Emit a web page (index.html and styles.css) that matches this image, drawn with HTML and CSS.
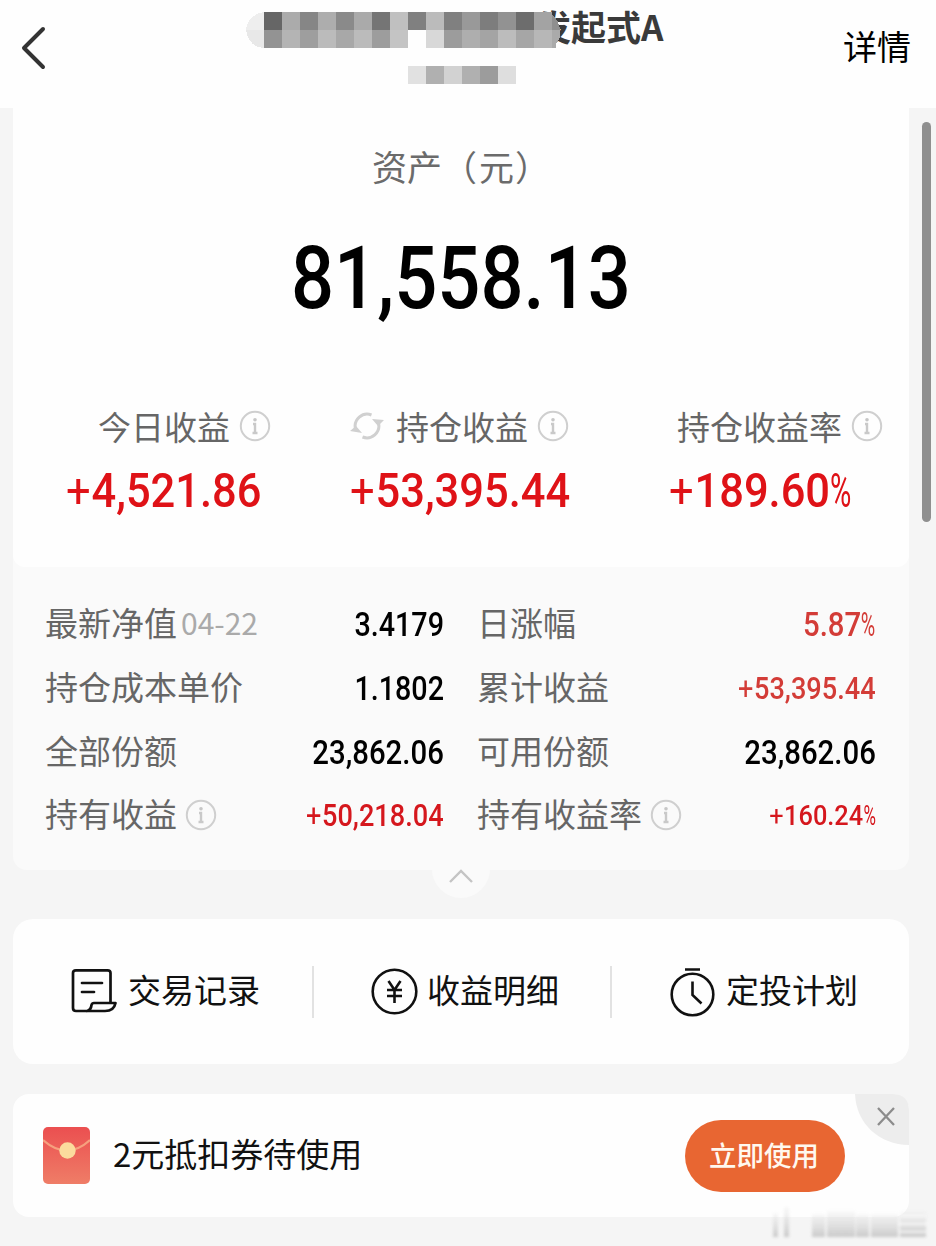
FILE: index.html
```
<!DOCTYPE html>
<html lang="zh-CN">
<head>
<meta charset="utf-8">
<title>资产详情</title>
<link rel="stylesheet" href="styles.css">
</head>
<body>
<svg class="defs" width="0" height="0" aria-hidden="true">
  <symbol id="info" viewBox="0 0 32 32"><circle cx="16" cy="16" r="14.2" fill="none" stroke="#cfcfcf" stroke-width="2"/><circle cx="16" cy="9.800" r="1.800" fill="#c6c6c6"/><path d="M14 14H16V22.800M13.500 23H18.500" fill="none" stroke="#c9c9c9" stroke-width="2.400"/></symbol>
</svg>
<header class="topbar">
  <svg class="back" width="26" height="44" viewBox="0 0 26 44"><path d="M22 3 3 22 22 41" fill="none" stroke="#333" stroke-width="4" stroke-linecap="round" stroke-linejoin="round"/></svg>
  <h1 class="title">发起式A</h1>
  <a class="more">详情</a>
  <svg class="mosaic" width="315" height="72" viewBox="0 0 315 72" shape-rendering="crispEdges">
    <path d="M18 0C8 1 0 9 0 18H18Z" fill="#eee"/><path d="M0 18C1 28 8 36 18 36V18Z" fill="#e8e8e8"/>
    <g><rect x="18" width="18" height="18" fill="#666"/><rect x="36" width="18" height="18" fill="#ababab"/><rect x="54" width="18" height="18" fill="#868686"/><rect x="72" width="18" height="18" fill="#adadad"/><rect x="90" width="18" height="18" fill="#8a8a8a"/><rect x="108" width="18" height="18" fill="#aaa"/><rect x="126" width="18" height="18" fill="#757575"/><rect x="144" width="18" height="18" fill="#c0c0c0"/><rect x="162" width="18" height="18" fill="#808080"/><rect x="180" width="18" height="18" fill="#bbb"/><rect x="198" width="18" height="18" fill="#808080"/><rect x="216" width="18" height="18" fill="#999"/><rect x="234" width="18" height="18" fill="#7d7d7d"/><rect x="252" width="18" height="18" fill="#929292"/><rect x="270" width="18" height="18" fill="#6d6d6d"/><rect x="288" width="18" height="18" fill="#a3a3a3"/><path d="M306 3Q313 8 314 18H306Z" fill="#8f8f8f"/></g>
    <g transform="translate(0 18)"><rect x="18" width="18" height="18" fill="#939393"/><rect x="36" width="18" height="18" fill="#b4b4b4"/><rect x="54" width="18" height="18" fill="#9e9e9e"/><rect x="72" width="18" height="18" fill="#bbb"/><rect x="90" width="18" height="18" fill="#a8a8a8"/><rect x="108" width="18" height="18" fill="#bbb"/><rect x="126" width="18" height="18" fill="#9d9d9d"/><rect x="144" width="18" height="18" fill="#c4c4c4"/><rect x="180" width="18" height="18" fill="#d8d8d8"/><rect x="198" width="18" height="18" fill="#9c9c9c"/><rect x="216" width="18" height="18" fill="#aeaeae"/><rect x="234" width="18" height="18" fill="#a4a4a4"/><rect x="252" width="18" height="18" fill="#bcbcbc"/><rect x="270" width="18" height="18" fill="#a6a6a6"/><rect x="288" width="18" height="18" fill="#b7b7b7"/><path d="M306 0H314V6Q313 11 310 13V18H306Z" fill="#aaa"/></g>
    <g transform="translate(162 54)"><rect width="18" height="18" fill="#e1e1e1"/><rect x="18" width="18" height="18" fill="#b0b0b0"/><rect x="36" width="18" height="18" fill="#d2d2d2"/><rect x="54" width="18" height="18" fill="#b0b0b0"/><rect x="72" width="18" height="18" fill="#9c9c9c"/><rect x="90" width="18" height="18" fill="#dedede"/></g>
  </svg>
</header>
<main class="page">
  <section class="details">
    <div class="asset">
      <div class="asset-label">资产<span class="paren open">（</span><span>元</span><span class="paren shut">）</span></div>
      <div class="asset-value"><span class="num">81,558.13</span></div>
      <div class="stats">
        <div class="stat"><div class="label first">今日收益<svg class="info"><use href="#info"/></svg></div><div class="value"><span class="num"><i class="plus">+</i>4,521.86</span></div></div>
        <div class="stat"><div class="label"><svg class="refresh" width="34" height="30" viewBox="0 0 34 30"><path d="M21.500 4A12 12 0 0 0 5.500 18M12.500 26A12 12 0 0 0 28.500 12" fill="none" stroke="#d0d0d0" stroke-width="3"/><path d="M0 20 6 15 12 22ZM34 9 28 15 22 8Z" fill="#d0d0d0"/></svg>持仓收益<svg class="info"><use href="#info"/></svg></div><div class="value"><span class="num"><i class="plus">+</i>53,395.44</span></div></div>
        <div class="stat"><div class="label third">持仓收益率<svg class="info"><use href="#info"/></svg></div><div class="value"><span class="num"><i class="plus">+</i>189.60<i class="pct">%</i></span></div></div>
      </div>
    </div>
    <div class="rows">
      <div class="cell"><span>最新净值<small>04-22</small></span><b class="num short">3.4179</b></div>
      <div class="cell"><span>日涨幅</span><b class="num soft">5.87<i class="pct">%</i></b></div>
      <div class="cell"><span>持仓成本单价</span><b class="num short">1.1802</b></div>
      <div class="cell"><span>累计收益</span><b class="num soft signed"><i class="plus">+</i>53,395.44</b></div>
      <div class="cell"><span>全部份额</span><b class="num">23,862.06</b></div>
      <div class="cell"><span>可用份额</span><b class="num">23,862.06</b></div>
      <div class="cell"><span>持有收益<svg class="info"><use href="#info"/></svg></span><b class="num red signed"><i class="plus">+</i>50,218.04</b></div>
      <div class="cell"><span>持有收益率<svg class="info"><use href="#info"/></svg></span><b class="num red rate"><i class="plus">+</i>160.24<i class="pct">%</i></b></div>
    </div>
    <svg class="fold" width="60" height="60" viewBox="0 0 60 60"><circle cx="30" cy="30" r="29" fill="#fafafa"/><path d="M19 43 30 32 41 43" fill="none" stroke="#c4c4c4" stroke-width="2.400"/></svg>
  </section>
  <nav class="actions">
    <a class="action"><svg width="46" height="46" viewBox="0 0 46 46" fill="none" stroke="#111" stroke-width="2.700" stroke-linejoin="round" stroke-linecap="round"><path d="M39.500 34V4Q39.500 1.400 36.500 1.400H5Q2 1.400 2 4V39Q2 42 5 42H34Q43 42 44.500 34H23Q21 34 20.500 36Q20 41 16 42"/><path d="M11 14H31M11 23H23"/></svg><span>交易记录</span></a>
    <a class="action"><svg width="47" height="47" viewBox="0 0 47 47" fill="none" stroke="#111" stroke-width="2.600"><circle cx="23.500" cy="23.500" r="21.800"/><path d="M17.500 13 23.500 22 29.500 13M16 22H31M16 28H31M23.500 22V35"/></svg><span>收益明细</span></a>
    <a class="action"><svg width="45" height="50" viewBox="0 0 45 50" fill="none" stroke="#111" stroke-width="2.600"><circle cx="22.500" cy="27.500" r="20.800"/><path d="M15 2.500H30M22.500 14.500V28L31.500 36.500"/></svg><span>定投计划</span></a>
  </nav>
  <section class="coupon">
    <svg width="47" height="57" viewBox="0 0 47 57"><defs><linearGradient id="env" x2="0" y2="1"><stop stop-color="#eb4f50"/><stop offset="1" stop-color="#ef7d67"/></linearGradient></defs><rect width="47" height="57" rx="5" fill="url(#env)"/><path d="M0 13Q24 34 47 13" fill="none" stroke="#f6a07e" stroke-width="2.200"/><circle cx="24.500" cy="23.500" r="8.200" fill="#fbdb9d"/></svg>
    <span class="coupon-text">2元抵扣券待使用</span>
    <button class="use">立即使用</button>
    <svg class="close" width="54" height="51" viewBox="0 0 54 51"><path d="M0 0H37Q54 0 54 17V51C24 51 1 29 0 0Z" fill="#ededed"/><path d="M23 14 39 31M39 14 23 31" stroke="#8c8c8c" stroke-width="2.300"/></svg>
  </section>
</main>
<div class="scrollbar"></div>
<svg class="watermark" width="160" height="34" viewBox="0 0 160 34"><defs><linearGradient id="wm" x2="0" y2="1"><stop stop-color="#ddd" stop-opacity=".15"/><stop offset="1" stop-color="#c9c9c9"/></linearGradient></defs><g fill="url(#wm)"><rect x="3" y="6" width="5" height="24"/><rect x="14" y="0" width="5" height="30"/><rect x="42" y="7" width="13" height="23"/><rect x="57" y="4" width="28" height="26"/><rect x="86" y="7" width="13" height="23"/><rect x="101" y="7" width="27" height="23"/><rect x="130" y="5" width="26" height="25"/></g><path d="M130 9H156M128 17H158M130 25H156" stroke="#fff" stroke-width="2" opacity=".7"/></svg>
</body>
</html>
```
FILE: styles.css
```
* { box-sizing: border-box; }
body {
  margin: 0;
  position: relative;
  height: 1246px;
  overflow: hidden;
  background: #f5f5f5;
  color: #111;
  font-family: "Noto Sans CJK SC", sans-serif;
  font-size: 33px;
}
.defs { position: absolute; }
.topbar {
  position: relative;
  display: flex;
  justify-content: space-between;
  height: 108px;
  padding: 0 25px 0 21px;
  background: #fefefe;
}
.back { margin-top: 26px; }
.title {
  margin: 0 0 0 489px;
  font-size: 35px;
  line-height: 52px;
  font-weight: 700;
  color: #3a3a3a;
}
.more { margin-left: auto; font-size: 34px; line-height: 92px; color: #000; }
.mosaic { position: absolute; left: 246px; top: 12px; }

.page { width: 909px; padding-left: 13px; }
.details {
  position: relative;
  height: 762px;
  background: #fafafa;
  border-radius: 0 0 14px 14px;
}
.asset {
  height: 459px;
  background: #fefefe;
  border-radius: 0 0 12px 12px;
}
.asset-label {
  display: flex;
  height: 84px;
  padding: 32px 0 0 359px;
  font-size: 35px;
  line-height: 52px;
  color: #6b6b6b;
}
.open { margin: 0 2px 0 0; }
.shut { margin-left: 1px; }
.asset-value {
  padding: 28px 0 0 278px;
  font-size: 87px;
  line-height: 100px;
  color: #000;
}
.num {
  display: inline-block;
  font-family: Roboto, sans-serif;
  font-weight: 500;
  transform: scaleX(.89);
  transform-origin: left center;
  white-space: nowrap;
}
.asset-value .num { transform: scaleX(.872); }
.plus { font-style: normal; font-weight: 400; margin-right: .02em; }
.pct {
  display: inline-block;
  font-style: normal;
  font-weight: 400;
  transform: scaleX(.67);
  transform-origin: left center;
  margin-right: -.24em;
}
.stats {
  display: grid;
  grid-template-columns: 284px 319px 1fr;
  padding: 73px 0 0 53px;
}
.label { display: flex; align-items: center; height: 50px; line-height: 42px; color: #666; white-space: nowrap; }
.label.first { padding-left: 32px; }
.label.third { padding-left: 8px; }
.info { width: 32px; height: 32px; margin-left: 9px; flex: none; }
.refresh { margin-right: 12px; }
.value { height: 71px; line-height: 71px; font-size: 48px; color: #df1217; }
.value .num { transform: scaleX(.905); }

.rows {
  display: grid;
  grid-template-columns: 399px 398px;
  column-gap: 34px;
  grid-auto-rows: 63.7px;
  padding: 25px 0 0 32px;
}
.cell { display: flex; align-items: center; justify-content: space-between; color: #666; }
.cell > span { display: flex; align-items: center; margin-top: -3px; }
.cell:nth-child(even) > span { margin-left: -1px; }
.cell > span .info { margin: 3px 0 0 8px; }
.cell small {
  margin-left: 4px;
  font: 400 30px/40px "Noto Sans CJK SC", sans-serif;
  color: #aaa;
}
.cell .num { margin-top: 2px; color: #000; font-size: 33px; transform-origin: right center; }
.cell .short { transform: scaleX(.87); }
.cell .soft { color: #d33c37; }
.cell .red { color: #d5171d; }
.cell .signed { font-size: 30.5px; }
.cell .rate { font-size: 28.5px; }
.fold { position: absolute; left: 418px; top: 731px; }

.actions {
  display: grid;
  grid-template-columns: 301px 298px 297px;
  align-items: center;
  height: 145px;
  margin-top: 49px;
  border-radius: 20px;
  background: #fefefe;
}
.action {
  display: flex;
  align-items: center;
  gap: 11px;
  height: 52px;
  padding-left: 58px;
  border-right: 2px solid #e2e2e2;
}
.action > span { margin-top: -6px; }
.action:nth-child(2) { gap: 9px; padding-left: 57px; }
.action:last-child { border: 0; }
.coupon {
  position: relative;
  display: flex;
  align-items: center;
  height: 123px;
  margin-top: 30px;
  padding: 0 64px 0 30px;
  border-radius: 16px;
  background: #fefefe;
}
.coupon-text { margin: -5px 0 0 23px; }
.use {
  width: 160px;
  height: 72px;
  margin-left: auto;
  padding: 0 2px 4px 0;
  border: 0;
  border-radius: 36px;
  background: #e86632;
  color: #fff8ef;
  font: 500 27.5px/68px "Noto Sans CJK SC", sans-serif;
}
.close { position: absolute; right: 0; top: 0; }
.scrollbar {
  position: absolute;
  left: 922px;
  top: 122px;
  width: 9px;
  height: 400px;
  border-radius: 5px;
  background: #8f8f8f;
}
.watermark { position: absolute; left: 770px; top: 1207px; filter: blur(1.5px); }
```
